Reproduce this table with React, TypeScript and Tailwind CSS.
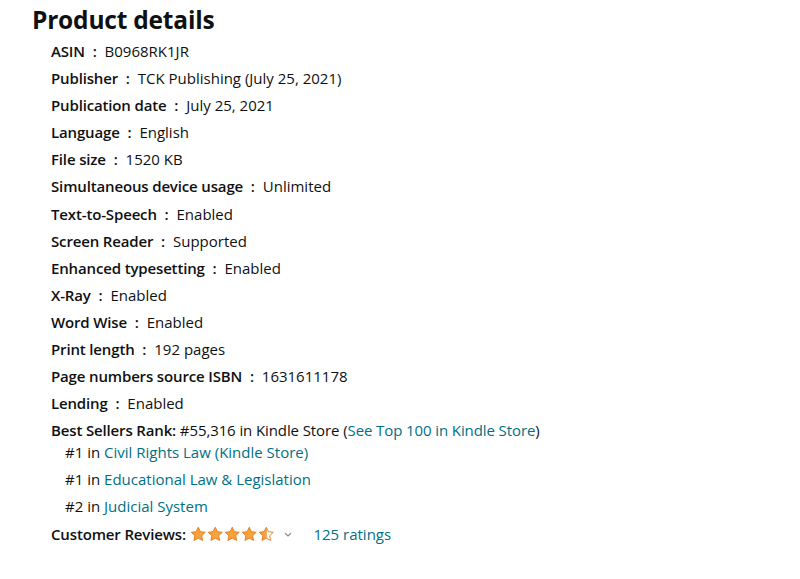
import React from "react";

const rows: [string, string][] = [
  ["ASIN", "B0968RK1JR"],
  ["Publisher", "TCK Publishing (July 25, 2021)"],
  ["Publication date", "July 25, 2021"],
  ["Language", "English"],
  ["File size", "1520 KB"],
  ["Simultaneous device usage", "Unlimited"],
  ["Text-to-Speech", "Enabled"],
  ["Screen Reader", "Supported"],
  ["Enhanced typesetting", "Enabled"],
  ["X-Ray", "Enabled"],
  ["Word Wise", "Enabled"],
  ["Print length", "192 pages"],
  ["Page numbers source ISBN", "1631611178"],
  ["Lending", "Enabled"],
];

const starPath =
  "M8 1.2l2.05 4.3 4.7.6-3.45 3.25.88 4.65L8 11.75 3.82 14l.88-4.65L1.25 6.1l4.7-.6z";

function Star({ fill }: { fill: "full" | "half" }) {
  return (
    <svg width="16.5" height="16.5" viewBox="0 0 16 16" className="block">
      <defs>
        <clipPath id="halfclip">
          <rect x="0" y="0" width="8.6" height="16" />
        </clipPath>
      </defs>
      {fill === "full" ? (
        <path d={starPath} fill="#f7a23b" stroke="#e07b1f" strokeWidth="0.9" strokeLinejoin="round" />
      ) : (
        <>
          <path d={starPath} fill="#f7a23b" clipPath="url(#halfclip)" />
          <path d={starPath} fill="none" stroke="#e07b1f" strokeWidth="0.9" strokeLinejoin="round" />
        </>
      )}
    </svg>
  );
}

export default function App() {
  return (
    <div
      className="w-[800px] h-[579px] bg-white text-[#0f1111] pl-[32px] pt-[4px]"
      style={{ fontFamily: '"Open Sans", Arial, sans-serif' }}
    >
      <h2 className="text-[24.5px] leading-[32px] font-bold tracking-[-0.2px]">Product details</h2>
      <div className="pl-[19px] pt-[2px] text-[15px]">
        {rows.map(([k, v]) => (
          <div key={k} className="h-[27.1px] leading-[27px] whitespace-nowrap">
            <span className="font-semibold tracking-[-0.15px]">{k}</span>
            <span className="font-semibold">&nbsp; : &nbsp;</span>
            <span>{v}</span>
          </div>
        ))}
        <div className="h-[27px] leading-[27px] whitespace-nowrap tracking-[-0.1px]">
          <span className="font-semibold tracking-[-0.15px]">Best Sellers Rank:</span> #55,316 in Kindle Store (
          <span className="text-[#007185]">See Top 100 in Kindle Store</span>)
        </div>
        <div className="pl-[14px]">
          <div className="h-[22px] leading-[17px]">
            #1 in <span className="text-[#007185]">Civil Rights Law (Kindle Store)</span>
          </div>
          <div className="h-[27px] leading-[27px]">
            #1 in <span className="text-[#007185]">Educational Law &amp; Legislation</span>
          </div>
          <div className="h-[27px] leading-[27px]">
            #2 in <span className="text-[#007185]">Judicial System</span>
          </div>
        </div>
        <div className="h-[27px] flex items-center whitespace-nowrap">
          <span className="font-semibold tracking-[-0.15px]">Customer Reviews:</span>
          <span className="flex items-center ml-[4px] gap-[0.5px]">
            <Star fill="full" />
            <Star fill="full" />
            <Star fill="full" />
            <Star fill="full" />
            <Star fill="half" />
          </span>
          <svg width="10" height="10" viewBox="0 0 10 10" className="ml-[9px]">
            <path d="M2 4l3 3 3-3" fill="none" stroke="#888" strokeWidth="1.1" />
          </svg>
          <span className="text-[#007185] ml-[20px]">125 ratings</span>
        </div>
      </div>
    </div>
  );
}
